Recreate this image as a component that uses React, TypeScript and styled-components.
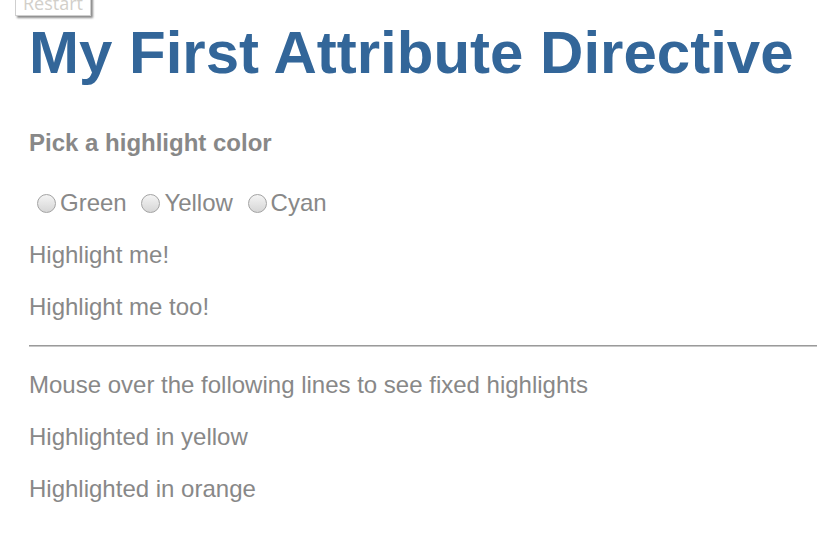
import styled, { createGlobalStyle } from "styled-components";

const GlobalStyle = createGlobalStyle`
    html, body {
        margin: 0;
        padding: 0;
        background: #ffffff;
    }

    body {
        font-family: "Liberation Sans", Arial, Helvetica, sans-serif;
        color: #888888;
        overflow: hidden;
    }
`;

const Page = styled.div`
    position: relative;
    padding: 18px 0 0 29px;
    font-size: 24px;
`;

const RestartBtn = styled.button`
    position: absolute;
    top: -10px;
    left: 15px;
    height: 26px;
    padding: 0 7px;
    border: 1px solid #cfcfcf;
    background: #ffffff;
    box-shadow: 2px 2px 2px #8c8c8c;
    color: #d2cfca;
    font-family: "Open Sans", sans-serif;
    font-size: 18px;
    line-height: 24px;
`;

const Title = styled.h1`
    margin: 0 0 42px;
    color: #336699;
    font-size: 60px;
    font-weight: 700;
    white-space: nowrap;
`;

const Heading = styled.h4`
    margin: 0 0 32px;
    font-size: 24px;
    font-weight: 700;
`;

const RadioRow = styled.div`
    white-space: nowrap;
    line-height: 28px;
`;

const Radio = styled.input`
    appearance: none;
    display: inline-block;
    vertical-align: -2px;
    width: 19px;
    height: 19px;
    margin: 0 4px 0 8px;
    border: 1px solid #a3a3a3;
    border-radius: 50%;
    background: linear-gradient(#f4f4f4, #d6d6d6);
    box-sizing: border-box;
`;

const Text = styled.p`
    margin: 24px 0;
    white-space: nowrap;
`;

const Rule = styled.hr`
    margin: 24px 0;
    width: calc(100% + 40px);
    height: 0;
    border: none;
    border-top: 1px solid #9a9a9a;
    border-bottom: 1px solid #c8c8c8;
`;

const colors = ["Green", "Yellow", "Cyan"];

const App = () => {
    return (
        <>
            <GlobalStyle />
            <Page>
                <RestartBtn>Restart</RestartBtn>
                <Title>My First Attribute Directive</Title>
                <Heading>Pick a highlight color</Heading>
                <RadioRow>
                    {colors.map((c, i) => (
                        <span key={c}>
                            <Radio type="radio" name="colors" />
                            {c}
                            {i < colors.length - 1 ? " " : ""}
                        </span>
                    ))}
                </RadioRow>
                <Text>Highlight me!</Text>
                <Text>Highlight me too!</Text>
                <Rule />
                <Text>Mouse over the following lines to see fixed highlights</Text>
                <Text>Highlighted in yellow</Text>
                <Text>Highlighted in orange</Text>
            </Page>
        </>
    );
};

export default App;
